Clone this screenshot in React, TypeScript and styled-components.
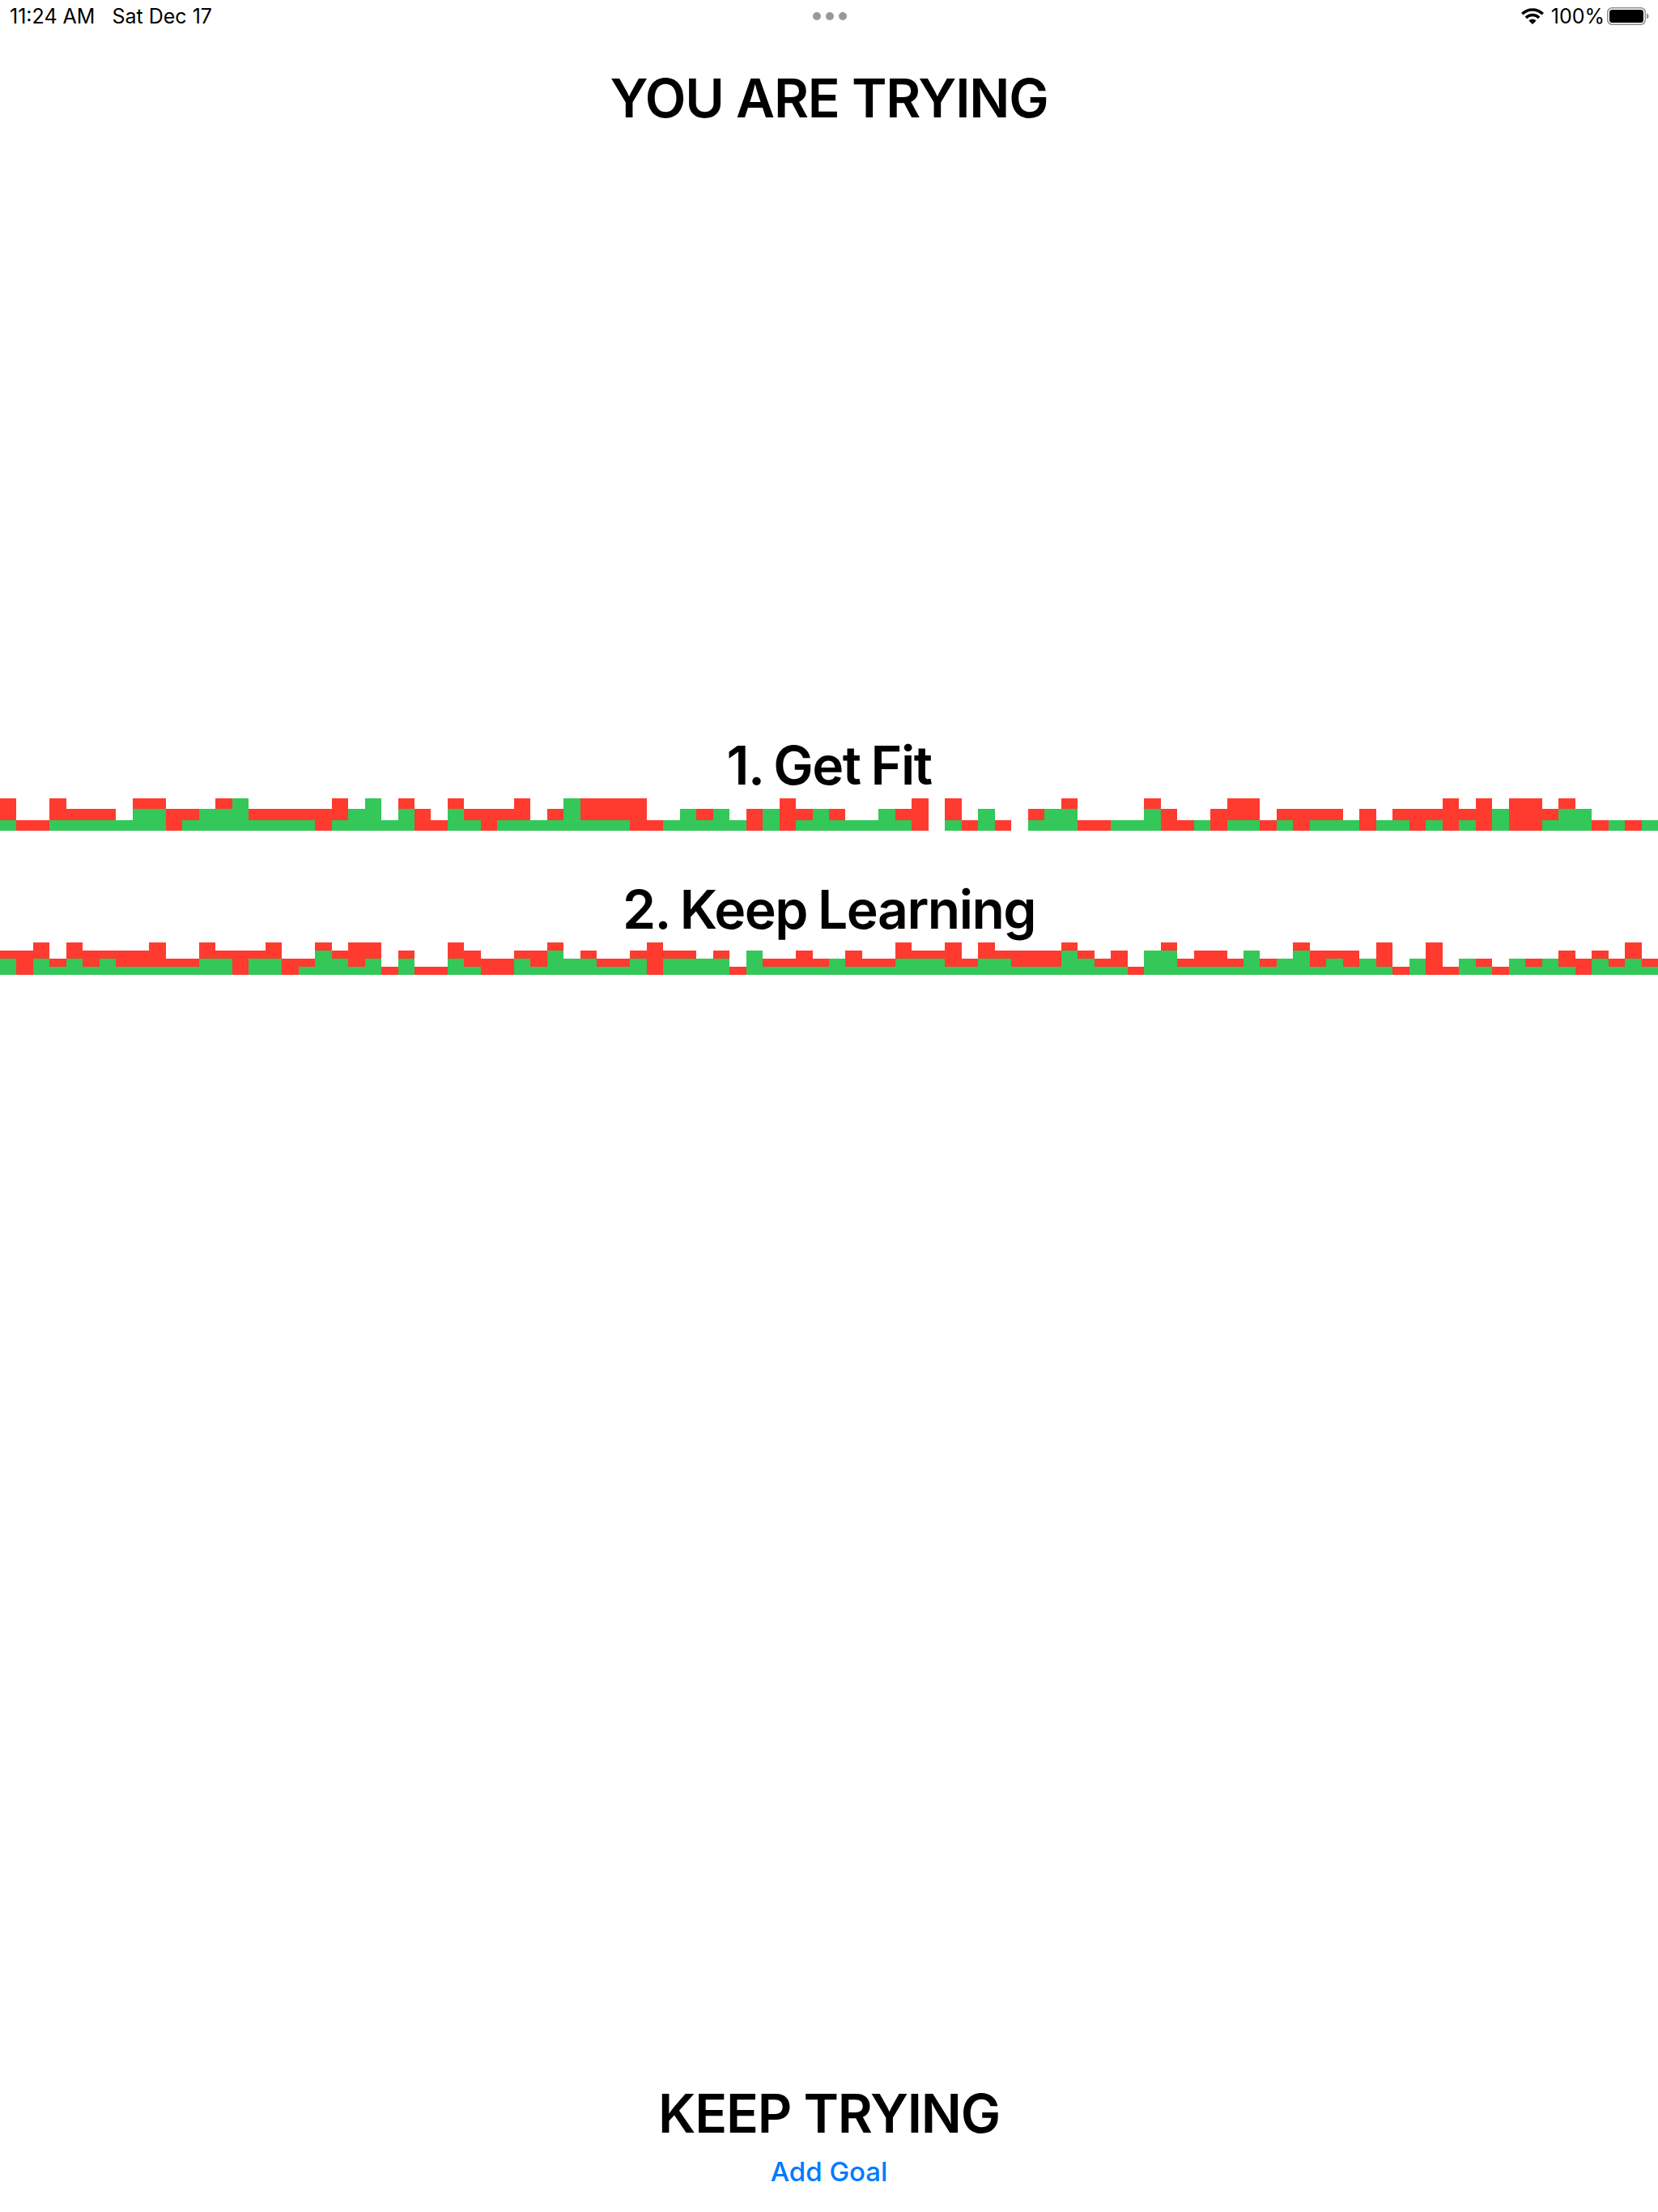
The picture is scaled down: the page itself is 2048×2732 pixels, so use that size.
import React from 'react';
import styled, { createGlobalStyle } from 'styled-components';

const GlobalStyle = createGlobalStyle`
  html, body {
    margin: 0;
    padding: 0;
    background: #fff;
  }
  body {
    font-family: Inter, "Liberation Sans", sans-serif;
    color: #000;
  }
`;

const Page = styled.div`
  display: flex;
  flex-direction: column;
  width: 2048px;
  height: 2732px;
  overflow: hidden;
  background: #fff;
`;

const StatusBar = styled.div`
  display: grid;
  grid-template-columns: 1fr auto 1fr;
  align-items: center;
  height: 40px;
  padding: 0 11px 0 12px;
  font-size: 25px;
  line-height: 40px;
`;

const StatusLeft = styled.div`
  display: flex;
  gap: 21px;
`;

const StatusRight = styled.div`
  display: flex;
  align-items: center;
  justify-content: flex-end;
`;

const BatteryGap = styled.span`
  margin: 0 3px 0 9px;
`;

const Dots = styled.div`
  display: flex;
  gap: 6px;
`;

const Dot = styled.span`
  width: 10px;
  height: 10px;
  border-radius: 50%;
  background: #999;
`;

const Heading = styled.h1`
  margin: 0;
  font-size: 66px;
  font-weight: 600;
  letter-spacing: -1.2px;
  line-height: 82px;
  text-align: center;
`;

const TopHeading = styled(Heading)`
  margin-top: 40px;
`;

const GoalList = styled.div`
  flex: 1;
  display: flex;
  flex-direction: column;
  padding-top: 686px;
`;

const Goal = styled.div`
  display: flex;
  flex-direction: column;
`;

const GoalTitle = styled(Heading)`
  height: 138px;
  letter-spacing: -1.5px;
  word-spacing: -2px;
  display: flex;
  align-items: flex-end;
  justify-content: center;
  white-space: pre;
`;

const Chart = styled.div`
  display: grid;
  grid-template-columns: repeat(100, 1fr);
  align-items: end;
  height: 40px;
`;

const Column = styled.div`
  display: flex;
  flex-direction: column-reverse;
`;

const Cell = styled.div<{ $h: number; $ok: boolean }>`
  height: ${p => p.$h}px;
  background: ${p => (p.$ok ? '#34c759' : '#ff3b30')};
`;

const Footer = styled.div`
  display: flex;
  flex-direction: column;
  align-items: center;
  padding-bottom: 28px;
`;

const AddGoal = styled.button`
  margin-top: 9px;
  padding: 0;
  border: none;
  background: none;
  font-family: inherit;
  font-size: 33px;
  font-weight: 500;
  line-height: 44px;
  color: #007aff;
`;

const WifiIcon = () => (
  <svg width="28" height="20" viewBox="0 0 28 20">
    <path d="M1.27 7.27A18 18 0 0 1 26.73 7.27" fill="none" stroke="#000" strokeWidth="3.6" />
    <path d="M5.87 11.87A11.5 11.5 0 0 1 22.13 11.87" fill="none" stroke="#000" strokeWidth="3.6" />
    <path d="M14 20L9.4 15.4A6.5 6.5 0 0 1 18.6 15.4Z" fill="#000" />
  </svg>
);

const BatteryIcon = () => (
  <svg width="52" height="22" viewBox="0 0 52 22">
    <rect x="0.750" y="0.750" width="46.500" height="20.500" rx="5.500" fill="none" stroke="#8e8e8e" strokeWidth="1.500" />
    <rect x="3" y="3" width="42" height="16" rx="3.500" fill="#000" />
    <path d="M49 7.500c1.500.5 2.500 1.900 2.500 3.500s-1 3-2.500 3.500z" fill="#8e8e8e" />
  </svg>
);

const goals = [
  {
    title: '1. Get Fit',
    rows: 3,
    days:
      '12 01 01 12 11 11 11 10 21 21 02 11 20 21 30 11 11 11 11 02 ' +
      '12 20 30 10 21 02 01 21 11 02 11 12 10 11 30 12 12 12 03 01 ' +
      '10 20 11 20 10 02 20 03 11 20 11 10 10 20 11 03 00 12 01 20 ' +
      '01 00 11 20 21 01 01 10 10 21 02 01 10 02 12 12 01 11 02 11 ' +
      '11 10 02 10 11 02 11 03 11 03 20 03 03 11 21 20 01 10 01 10',
  },
  {
    title: '2. Keep Learning',
    rows: 4,
    days:
      '21 03 22 11 22 12 21 12 12 13 11 11 22 21 03 21 22 02 11 31 ' +
      '21 13 22 01 21 01 01 22 12 02 02 21 12 31 20 21 11 11 21 04 ' +
      '21 21 20 21 01 30 11 11 12 11 20 12 11 11 22 21 21 13 11 22 ' +
      '21 12 12 12 31 21 11 12 01 30 31 11 12 12 11 30 11 20 31 12 ' +
      '21 12 20 13 01 20 04 01 20 11 01 20 11 20 12 02 21 11 22 11',
  },
];

const HistoryChart: React.FC<{ days: string; rows: number }> = ({ days, rows }) => (
  <Chart>
    {days.split(' ').map((day, i) => {
      const kept = Number(day[0]);
      const missed = Number(day[1]);
      return (
        <Column key={i}>
          {Array.from({ length: kept + missed }, (_, n) => (
            <Cell key={n} $h={40 / rows} $ok={n < kept} />
          ))}
        </Column>
      );
    })}
  </Chart>
);

const App: React.FC = () => (
  <Page>
    <GlobalStyle />
    <StatusBar>
      <StatusLeft>
        <span>11:24 AM</span>
        <span>Sat Dec 17</span>
      </StatusLeft>
      <Dots>
        <Dot />
        <Dot />
        <Dot />
      </Dots>
      <StatusRight>
        <WifiIcon />
        <BatteryGap>100%</BatteryGap>
        <BatteryIcon />
      </StatusRight>
    </StatusBar>
    <TopHeading>YOU ARE TRYING</TopHeading>
    <GoalList>
      {goals.map(goal => (
        <Goal key={goal.title}>
          <GoalTitle>{goal.title}</GoalTitle>
          <HistoryChart days={goal.days} rows={goal.rows} />
        </Goal>
      ))}
    </GoalList>
    <Footer>
      <Heading>KEEP TRYING</Heading>
      <AddGoal>Add Goal</AddGoal>
    </Footer>
  </Page>
);

export default App;
